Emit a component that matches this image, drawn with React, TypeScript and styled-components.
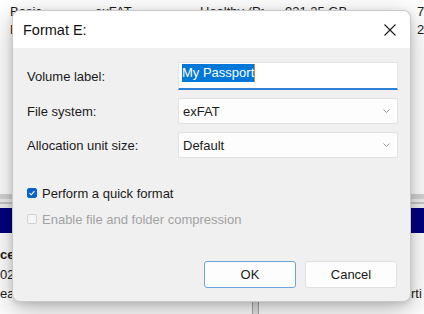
import React from 'react'
import styled, { createGlobalStyle } from 'styled-components'

const GlobalStyle = createGlobalStyle`
  html, body {
    margin: 0;
    padding: 0;
    background: #fff;
  }
`

const Desktop = styled.div`
  position: relative;
  width: 424px;
  height: 314px;
  overflow: hidden;
  background: #fff;
  font-family: 'Liberation Sans', Arial, sans-serif;
  font-size: 13px;
  color: #1b1b1b;
  display: flex;
  flex-direction: column;
`

/* ---- disk management window behind the dialog ---- */

const VolumeList = styled.div`
  height: 194px;
  padding-top: 3px;
  box-sizing: border-box;
  background: #fff;
`

const VolumeRow = styled.div`
  display: grid;
  grid-template-columns: 85px 105px 85px 132px 1fr;
  padding-left: 10px;
  height: 18px;
  line-height: 18px;
  white-space: nowrap;
  & > span {
    overflow: hidden;
    max-width: 64px;
  }
`

const SplitArea = styled.div`
  border-top: 5px solid #d4d4d4;
  background: #f0f0f0;
  padding: 3px 0 4px;
`

const Rule = styled.div`
  height: 2px;
  background: #c6c6c6;
`

const PartitionBar = styled.div`
  height: 25px;
  background: #00007f;
`

const DiskRow = styled.div`
  flex: 1;
  display: flex;
  background: #fff;
`

const DiskText = styled.div<{ $width: number }>`
  width: ${(p) => p.$width}px;
  overflow: hidden;
  white-space: nowrap;
  padding-top: 12px;
  line-height: 19.5px;
`

const Bold = styled.div`
  font-weight: bold;
`

const Gap = styled.div<{ $width: number }>`
  width: ${(p) => p.$width}px;
`

const Divider = styled.div`
  width: 5px;
  background: #e4e4e4;
  border-left: 1px solid #a8a8a8;
  border-right: 1px solid #a8a8a8;
`

const Filler = styled.div`
  flex: 1;
`

/* ---- format dialog ---- */

const Dialog = styled.div`
  position: absolute;
  left: 12px;
  top: 10px;
  width: 399px;
  height: 292px;
  box-sizing: border-box;
  background: #f0f0f0;
  border: 1px solid rgba(0, 0, 0, 0.16);
  border-radius: 8px;
  box-shadow: 0 8px 28px rgba(0, 0, 0, 0.28), 0 2px 6px rgba(0, 0, 0, 0.12);
  overflow: hidden;
  display: flex;
  flex-direction: column;
`

const TitleBar = styled.div`
  height: 37px;
  background: #fff;
  display: flex;
  align-items: center;
  padding-left: 10px;
`

const Title = styled.div`
  flex: 1;
  font-size: 14.5px;
  color: #111;
`

const CloseButton = styled.div`
  width: 40px;
  height: 37px;
  display: flex;
  align-items: center;
  justify-content: center;
`

const Body = styled.div`
  flex: 1;
  display: flex;
  flex-direction: column;
  padding: 14px 12px 13px 14px;
`

const Form = styled.div`
  display: grid;
  grid-template-columns: 151px 220px;
  row-gap: 8px;
  align-items: center;
`

const Label = styled.div`
  color: #1a1a1a;
`

const TextField = styled.div`
  height: 28px;
  box-sizing: border-box;
  background: #fff;
  border: 1px solid #e4e4e4;
  border-bottom: 2px solid #2f7fd6;
  padding: 1px 0 0 3px;
  display: flex;
  align-items: flex-start;
`

const Selected = styled.span`
  background: #0078d7;
  color: #fff;
  line-height: 18px;
  border-right: 1px solid #d9823a;
`

const Select = styled.div`
  height: 26px;
  box-sizing: border-box;
  background: #fdfdfd;
  border: 1px solid #e1e1e1;
  border-radius: 2px;
  padding: 0 7px 0 4px;
  display: flex;
  align-items: center;
  justify-content: space-between;
`

const Options = styled.div`
  margin-top: 22px;
  display: flex;
  flex-direction: column;
`

const CheckRow = styled.label<{ $disabled?: boolean }>`
  height: 26px;
  display: flex;
  align-items: center;
  gap: 5px;
  color: ${(p) => (p.$disabled ? '#a2a2a2' : '#1a1a1a')};
`

const Box = styled.span<{ $checked?: boolean }>`
  width: 10px;
  height: 10px;
  box-sizing: border-box;
  border-radius: 2px;
  display: flex;
  align-items: center;
  justify-content: center;
  background: ${(p) => (p.$checked ? '#0a63c6' : '#f5f5f5')};
  border: 1px solid ${(p) => (p.$checked ? '#0a63c6' : '#d2d2d2')};
`

const ButtonRow = styled.div`
  margin-top: auto;
  display: flex;
  justify-content: flex-end;
  gap: 9px;
  padding-right: 1px;
`

const Button = styled.div<{ $primary?: boolean }>`
  width: 92px;
  height: 27px;
  box-sizing: border-box;
  background: #fdfdfd;
  border: 1px solid ${(p) => (p.$primary ? '#6aa3df' : '#e0e0e0')};
  border-radius: 3px;
  display: flex;
  align-items: center;
  justify-content: center;
  color: #1a1a1a;
`

const Chevron = () => (
  <svg width="7" height="4" viewBox="0 0 7 4">
    <path d="M0.5 0.5 L3.5 3.5 L6.5 0.5" fill="none" stroke="#9a9a9a" strokeWidth="1" />
  </svg>
)

const Check = () => (
  <svg width="8" height="8" viewBox="0 0 8 8">
    <path d="M1.5 4.2 L3.2 5.8 L6.5 2.2" fill="none" stroke="#fff" strokeWidth="1.1" />
  </svg>
)

const CloseIcon = () => (
  <svg width="12" height="12" viewBox="0 0 12 12">
    <path d="M0.5 0.5 L11.5 11.5 M11.5 0.5 L0.5 11.5" stroke="#1a1a1a" strokeWidth="1.1" />
  </svg>
)

const App = () => {
  return (
    <>
      <GlobalStyle />
      <Desktop>
        <VolumeList>
          <VolumeRow>
            <span>Basic</span>
            <span>exFAT</span>
            <span>Healthy (Primary Partition)</span>
            <span>931.25 GB</span>
            <span>7</span>
          </VolumeRow>
          <VolumeRow>
            <span>E:</span>
            <span></span>
            <span></span>
            <span></span>
            <span>2</span>
          </VolumeRow>
        </VolumeList>
        <SplitArea>
          <Rule />
        </SplitArea>
        <PartitionBar />
        <DiskRow>
          <DiskText $width={12}>
            <Bold>ce</Bold>
            <div>02.</div>
            <div>ea</div>
          </DiskText>
          <Gap $width={240} />
          <Divider />
          <Filler />
          <DiskText $width={13}>
            <div>&nbsp;</div>
            <div>&nbsp;</div>
            <div>rti</div>
          </DiskText>
        </DiskRow>

        <Dialog>
          <TitleBar>
            <Title>Format E:</Title>
            <CloseButton>
              <CloseIcon />
            </CloseButton>
          </TitleBar>
          <Body>
            <Form>
              <Label>Volume label:</Label>
              <TextField>
                <Selected>My Passport</Selected>
              </TextField>
              <Label>File system:</Label>
              <Select>
                <span>exFAT</span>
                <Chevron />
              </Select>
              <Label>Allocation unit size:</Label>
              <Select>
                <span>Default</span>
                <Chevron />
              </Select>
            </Form>
            <Options>
              <CheckRow>
                <Box $checked>
                  <Check />
                </Box>
                Perform a quick format
              </CheckRow>
              <CheckRow $disabled>
                <Box />
                Enable file and folder compression
              </CheckRow>
            </Options>
            <ButtonRow>
              <Button $primary>OK</Button>
              <Button>Cancel</Button>
            </ButtonRow>
          </Body>
        </Dialog>
      </Desktop>
    </>
  )
}

export default App
